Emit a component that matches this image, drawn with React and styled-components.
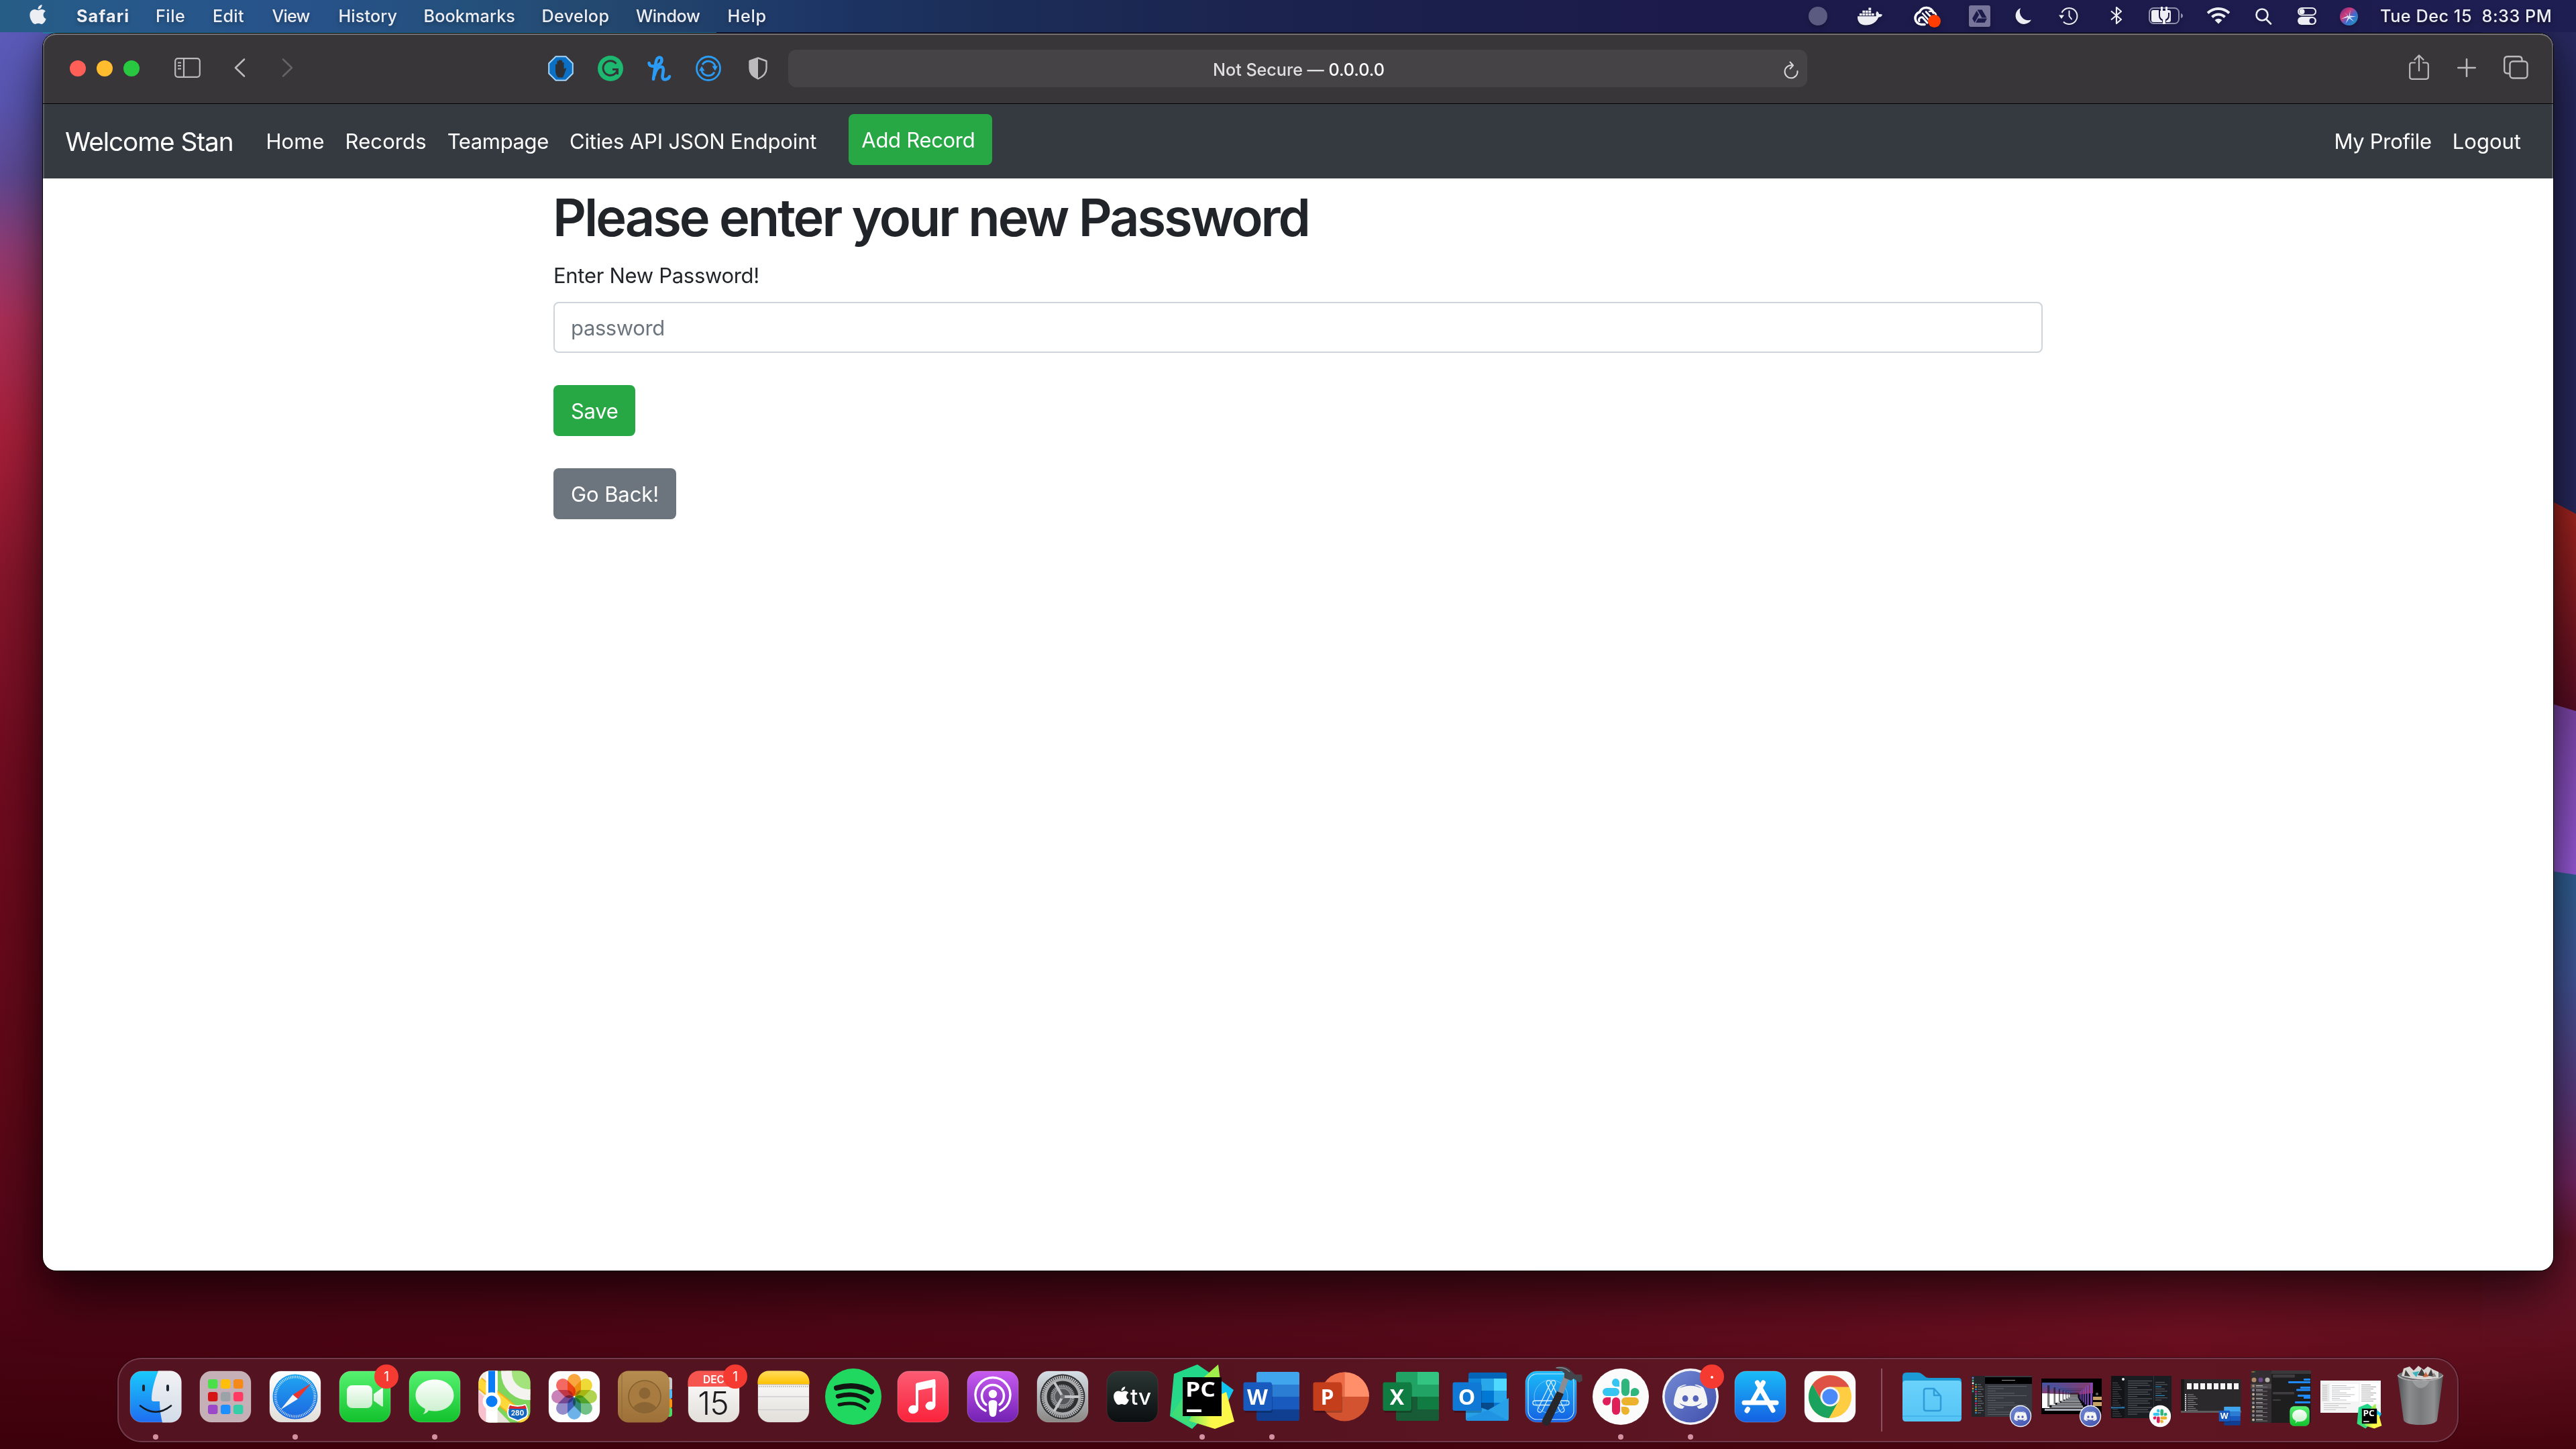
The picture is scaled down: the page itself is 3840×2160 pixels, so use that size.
import React from "react";
import styled, { createGlobalStyle } from "styled-components";
import { FaApple, FaDocker, FaGoogleDrive } from "react-icons/fa";

const GlobalStyle = createGlobalStyle`
  * { box-sizing: border-box; }
  body { margin: 0; overflow: hidden; background: #4d0615; }
`;

const Desktop = styled.main`
  position: relative;
  width: 3840px;
  height: 2160px;
  overflow: hidden;
  display: flex;
  flex-direction: column;
  font-family: Inter, "Liberation Sans", sans-serif;
`;

const Wallpaper = styled.svg`
  position: absolute;
  inset: 0;
  width: 100%;
  height: 100%;
`;

const Defs = styled.svg`
  position: absolute;
  width: 0;
  height: 0;
`;

/* ---------- menu bar ---------- */

const MenuBar = styled.header`
  position: relative;
  flex: none;
  height: 48px;
  padding: 0 38px 0 43px;
  display: flex;
  align-items: center;
  color: #eceef3;
  background: linear-gradient(90deg, #265d86 0, #27588a 200px, #27528a 450px, #24507c 700px, #24486f 900px, #1d3565 1230px, #1b2e58 1450px, #1b244f 1850px, #1b1f4b 2150px, #1c1a4b 2500px, #1d1b4c 3200px, #1f1e53 3840px);
`;

const Glyph = styled.svg`
  flex: none;
  display: block;
  width: ${(p) => p.$w}px;
  height: ${(p) => p.$h}px;
  margin-left: ${(p) => p.$gap || 0}px;
  margin-top: ${(p) => p.$drop || 0}px;
  overflow: visible;
`;

const AppleMark = styled(FaApple)`
  flex: none;
  width: 27px;
  height: 33px;
  margin-right: 44px;
  margin-top: -5px;
`;

const Whale = styled(FaDocker)`
  flex: none;
  width: 37px;
  height: 33px;
  margin-left: 45px;
`;

const DriveBox = styled.span`
  flex: none;
  display: grid;
  place-items: center;
  width: 32px;
  height: 32px;
  margin-left: 42px;
  color: #1c1a4b;
  background: #77769a;
  border-radius: 3px;
  svg { width: 22px; height: 22px; }
`;

const MenuItem = styled.span`
  flex: none;
  width: ${(p) => p.$w}px;
  font-size: 25.2px;
  line-height: 48px;
  font-weight: ${(p) => (p.$strong ? 700 : 500)};
  letter-spacing: ${(p) => p.$track}px;
  white-space: pre;
  text-shadow: 0 3px 6px rgba(0, 0, 0, 0.3);
`;

const Status = styled.div`
  display: flex;
  align-items: center;
  margin-left: auto;
  filter: drop-shadow(0 3px 3px rgba(0, 0, 0, 0.25));
`;

const Clock = styled(MenuItem)`
  margin-left: 33px;
`;

/* ---------- browser window ---------- */

const Window = styled.section`
  position: relative;
  flex: none;
  width: 3742px;
  height: 1844px;
  margin: 2px 0 0 64px;
  border-radius: 20px;
  overflow: hidden;
  background: #fff;
`;

const WindowShadow = styled.div`
  position: absolute;
  left: 64px;
  top: 50px;
  width: 3742px;
  height: 1844px;
  border-radius: 20px;
  box-shadow: 0 0 0 1px #000, 0 36px 80px 0 rgba(0, 0, 0, 0.62), 0 0 30px rgba(0, 0, 0, 0.25);
`;

const Toolbar = styled.div`
  display: flex;
  align-items: center;
  height: 105px;
  padding: 0 37px 0 40px;
  background: #383639;
  border-bottom: 1px solid #000;
  border-radius: 20px 20px 0 0;
  box-shadow: inset 0 2px 0 #737174, inset 2px 0 0 #59575a, inset -2px 0 0 #59575a;
`;

const Lights = styled.div`
  display: flex;
  gap: 16px;
`;

const Light = styled.i`
  width: 24px;
  height: 24px;
  border-radius: 50%;
  background: ${(p) => p.$color};
`;

const AddressBar = styled.div`
  display: grid;
  grid-template-columns: 1fr auto 1fr;
  align-items: center;
  width: 1519px;
  height: 56px;
  margin: 0 auto 0 31px;
  padding: 3px 13px 0 16px;
  border-radius: 12px;
  background: #454346;
`;

const Address = styled.span`
  grid-column: 2;
  font-size: 25.2px;
  font-weight: 500;
  letter-spacing: -0.05px;
  color: #dfdee0;
  b { font-weight: 500; color: #fff; }
`;

const Reload = styled(Glyph)`
  justify-self: end;
`;

/* ---------- page ---------- */

const Navbar = styled.nav`
  display: flex;
  align-items: center;
  gap: 31px;
  height: 111px;
  padding: 0 48px 0 33px;
  background: #343a40;
  box-shadow: inset 2px 0 0 #5a5f64, inset -2px 0 0 #5a5f64;
  color: #fff;
`;

const Brand = styled.span`
  font-size: 38.8px;
  letter-spacing: -1.1px;
  width: 268.500px;
  white-space: nowrap;
`;

const NavLink = styled.a`
  font-size: 31px;
  letter-spacing: ${(p) => p.$track}px;
  white-space: nowrap;
  margin-left: ${(p) => (p.$push ? "auto" : "0")};
`;

const Button = styled.button`
  display: block;
  height: 76px;
  padding: 0 ${(p) => (p.$snug ? 19 : 26)}px;
  width: ${(p) => p.$w}px;
  border: 0;
  border-radius: 8px;
  background: ${(p) => (p.$tone === "muted" ? "#6c757d" : "#28a745")};
  color: #fff;
  font: 400 31px Inter, "Liberation Sans", sans-serif;
  letter-spacing: ${(p) => p.$track}px;
  text-align: left;
  white-space: nowrap;
`;

const NavButton = styled(Button)`
  margin: 0 0 5px 17px;
`;

const Container = styled.div`
  width: 2220px;
  margin-left: 761px;
  padding-top: 10px;
  color: #212529;
`;

const Heading = styled.h1`
  margin: 0 0 16px -1px;
  font-size: 77.6px;
  line-height: 96px;
  font-weight: 600;
  letter-spacing: -3.1px;
`;

const Form = styled.form`
  display: flex;
  flex-direction: column;
  align-items: flex-start;
`;

const FieldLabel = styled.label`
  font-size: 31px;
  line-height: 46px;
  letter-spacing: -0.3px;
  margin-bottom: 16px;
`;

const Field = styled.input`
  width: 100%;
  height: 76px;
  margin-bottom: 48px;
  padding: 0 24px;
  border: 2px solid #ced4da;
  border-radius: 8px;
  background: #fff;
  font: 400 31px Inter, "Liberation Sans", sans-serif;
  letter-spacing: -0.4px;
  &::placeholder { color: #6c757d; opacity: 1; }
`;

const BackRow = styled.div`
  margin-top: 48px;
`;

/* ---------- dock ---------- */

const Dock = styled.footer`
  position: relative;
  flex: none;
  display: flex;
  width: 3490px;
  height: 126px;
  margin: 130px 0 0 175px;
  padding: 0 5px;
  border-radius: 36px;
  background: linear-gradient(90deg, #541320, #53131f 40%, #5f1623 75%, #5e1522);
  box-shadow: inset 0 0 0 2px #74394a, 0 0 0 1px rgba(20, 0, 5, 0.55);
`;

const DockSlot = styled.svg`
  flex: none;
  width: 104px;
  height: 126px;
  overflow: visible;
`;

const Divider = styled.div`
  width: 48px;
  padding: 16px 0 16px 24px;
  &::before {
    content: "";
    display: block;
    width: 2px;
    height: 94px;
    background: #8c5161;
  }
`;

const Petal = styled.rect`
  mix-blend-mode: multiply;
`;

const SANS = 'Inter, "Liberation Sans", sans-serif';
const OFFICE = '"Open Sans", "Noto Sans", sans-serif';

const Tile = ({ fill, stroke = "rgba(255,255,255,.25)" }) => (
  <rect x="-38" y="-38" width="76" height="76" rx="17" fill={fill} stroke={stroke} strokeWidth="1" />
);

const AlertBadge = ({ x = 32, text }) => (
  <g>
    <circle cx={x} cy="-30" r="18" fill="#f53a31" />
    {text ? (
      <text x={x} y="-23" fill="#fff" fontSize="20" textAnchor="middle" fontFamily={SANS}>{text}</text>
    ) : (
      <circle cx={x} cy="-29" r="2" fill="#fff" />
    )}
  </g>
);

const Finder = () => (
  <g>
    <Tile fill="url(#finderBlue)" />
    <path d="M4-38.5C-2-24-6-8-6 4q0 3 3 3h9C6 18 8 30 10 38.5H22a16.500 16.500 0 0 0 16.500-16.500V-22A16.500 16.500 0 0 0 22-38.500Z" fill="url(#finderWhite)" />
    <path d="M-18-16v6M18-16v6" stroke="#1c2630" strokeWidth="4" strokeLinecap="round" />
    <path d="M-23 13.500Q0 32 23 13.500" stroke="#141a22" strokeWidth="2.600" fill="none" strokeLinecap="round" />
  </g>
);

const PADS = ["#4be04a", "#ffbe08", "#f58a1b", "#d51616", "#9ba3a8", "#ff3b63", "#9a48c8", "#1e8fff", "#37cda8"];
const Launchpad = () => (
  <g>
    <Tile fill="#c6b0b8" />
    {PADS.map((c, i) => (
      <rect key={c} x={-26 + (i % 3) * 19} y={-26 + Math.floor(i / 3) * 19} width="14.500" height="14" rx="3.500" fill={c} />
    ))}
  </g>
);

const SafariIcon = () => (
  <g>
    <Tile fill="url(#paper)" />
    <circle r="33.500" fill="url(#skyBlue)" />
    <circle r="29.500" fill="none" stroke="#fff" strokeOpacity=".8" strokeWidth="4" strokeDasharray="1 1.575" />
    <path d="M24-20 4 3.500-3.500-3Z" fill="#e8362f" />
    <path d="M-22 19.500-3.500-3 4 3.500Z" fill="#f3f4f6" />
  </g>
);

const FaceTime = () => (
  <g>
    <Tile fill="url(#green)" />
    <rect x="-27" y="-17" width="38" height="34" rx="8" fill="url(#milk)" />
    <path d="M13-4 25-12.500q2-1 2 1v25q0 2-2 1L13 6Z" fill="url(#milk)" />
    <AlertBadge text="1" />
  </g>
);

const Messages = () => (
  <g>
    <Tile fill="url(#green)" />
    <path d="M0-25.500C17-25.500 28.500-15 28.500-2S17 21.500 0 21.500q-5 0-9-1Q-12 25-17.500 26-13.500 22-14.500 18-28.500 11-28.500-2C-28.500-15-17-25.500 0-25.500Z" fill="url(#milk)" />
  </g>
);

const Maps = () => (
  <g clipPath="url(#tileClip)">
    <rect x="-39" y="-39" width="78" height="78" fill="#7fd65c" />
    <path d="M-39-39H-10V30L-39 10Z" fill="#efece6" />
    <path d="M-39-10 39 70H-39Z" fill="#e9e5dd" />
    <path d="M-39-8-27 4V39H-39Z" fill="#f8bfcd" />
    <path d="M-39-22 39 42" stroke="#f3b21d" strokeWidth="17" />
    <path d="M-39-22 39 42" stroke="#ffd93a" strokeWidth="13" />
    <circle cx="36" cy="-36" r="33" fill="#a2e37b" stroke="#f5f3ef" strokeWidth="16" />
    <path d="M-19-39V39" stroke="#fff" strokeWidth="17" />
    <path d="M-19-39V7" stroke="#0a7cf5" strokeWidth="10" />
    <circle cx="-19" cy="7" r="13.500" fill="#fff" />
    <circle cx="-19" cy="7" r="8.500" fill="#0a7cf5" />
    <path d="M8 12Q20 16 31 12 38 26 31 31L20 36 8 31Q2 26 8 12Z" fill="#1566c0" stroke="#fff" strokeWidth="2" />
    <path d="M8 13Q20 17 31 13L33 18H6Z" fill="#d9232e" />
    <text x="19.500" y="28" fontSize="10" fontWeight="700" fill="#fff" textAnchor="middle" fontFamily={SANS}>280</text>
  </g>
);

const PETALS = ["#fb9a1e", "#efd516", "#a6cf33", "#5bb974", "#56a9e8", "#8279c4", "#c26fae", "#f4524a"];
const Photos = () => (
  <g>
    <Tile fill="#fdfdfd" />
    {PETALS.map((c, i) => (
      <Petal key={c} x="-10" y="-34" width="20" height="33" rx="10" fill={c} opacity=".86" transform={`rotate(${i * 45})`} />
    ))}
  </g>
);

const Contacts = () => (
  <g>
    <rect x="30" y="-29" width="12" height="20" rx="4" fill="#c9c9c9" />
    <rect x="30" y="-11" width="12" height="14" rx="3" fill="#55b9f3" />
    <rect x="30" y="3" width="12" height="14" rx="3" fill="#fb9410" />
    <rect x="30" y="16" width="12" height="14" rx="4" fill="#4fd964" />
    <rect x="-39" y="-38.500" width="77" height="77" rx="16" fill="url(#leather)" />
    <path d="M-33-35V35" stroke="#8c6632" strokeWidth="1.500" opacity=".6" />
    <circle cx="1" cy="0" r="24" fill="#a87c41" stroke="#84602f" strokeWidth="1.600" />
    <circle cx="1" cy="-5" r="8.500" fill="#8b6634" />
    <path d="M-16 16Q-10 8 1 8t17 8Q12 24 1 24T-16 16Z" fill="#8b6634" />
  </g>
);

const Calendar = () => (
  <g>
    <Tile fill="url(#paper)" />
    <path d="M-38.500-15V-22A16.500 16.500 0 0 1-22-38.500H22A16.500 16.500 0 0 1 38.500-22V-15Z" fill="#f5554e" />
    <text x="0" y="-20" fontSize="15.500" fontWeight="600" fill="#fff" textAnchor="middle" fontFamily={SANS}>DEC</text>
    <text x="-1" y="27" fontSize="48" fontWeight="300" fill="#1d1d1f" textAnchor="middle" fontFamily={SANS} letterSpacing="-1">15</text>
    <AlertBadge text="1" />
  </g>
);

const Notes = () => (
  <g>
    <Tile fill="url(#paper)" />
    <path d="M-38.500-18.500V-22A16.500 16.500 0 0 1-22-38.500H22A16.500 16.500 0 0 1 38.500-22V-18.500Z" fill="url(#noteYellow)" />
    <path d="M-38-18H38" stroke="#b5a78a" strokeWidth="1" />
    <path d="M-37-15H38" stroke="#a9a7a3" strokeWidth="1.500" strokeDasharray="1.500 1.500" />
    <path d="M-38 0H38M-38 19.500H38" stroke="#cfd0d4" strokeWidth="1.500" />
  </g>
);

const Spotify = () => (
  <g>
    <circle r="42" fill="#20d760" />
    <g fill="none" stroke="#121512" strokeLinecap="round">
      <path d="M-25-13Q5-21 27-7.500" strokeWidth="8" />
      <path d="M-23-.5Q4-8 21.500 6" strokeWidth="6.500" />
      <path d="M-21 12Q3 6 17 17.500" strokeWidth="5" />
    </g>
  </g>
);

const Music = () => (
  <g>
    <Tile fill="url(#musicRed)" />
    <path d="M-9-20.500 16-26Q18.500-26.500 18.500-24V-14.500L-7-9.500V19H-11V-18Q-11-20-9-20.500Z" fill="#fff" />
    <path d="M14-18h4.500V13H14Z" fill="#fff" />
    <ellipse cx="-14.500" cy="19" rx="7.500" ry="6.300" fill="#fff" transform="rotate(-12 -14.500 19)" />
    <ellipse cx="11" cy="13.500" rx="7.500" ry="6.300" fill="#fff" transform="rotate(-12 11 13.500)" />
  </g>
);

const Podcasts = () => (
  <g>
    <Tile fill="url(#podPurple)" />
    <g fill="none" stroke="#fff" strokeWidth="3.500" strokeLinecap="round">
      <path d="M-11 21A26 26 0 1 1 11 21" />
      <path d="M-10 12A16.500 16.500 0 1 1 10 12" />
    </g>
    <circle cy="-4" r="6.200" fill="#fff" />
    <path d="M0 5q7 0 6.500 6L5 26q-1 4-5 4t-5-4L-6.500 11Q-7 5 0 5Z" fill="#fff" />
  </g>
);

const Settings = () => (
  <g>
    <Tile fill="url(#silver)" />
    <circle r="33.500" fill="#2e2f31" />
    <circle r="29" fill="none" stroke="#b9bbbd" strokeWidth="5" strokeDasharray="2 1.035" />
    <circle r="25.500" fill="none" stroke="#a8aaac" strokeWidth="4" />
    <circle r="16" fill="#55575a" stroke="#a0a2a4" strokeWidth="4" strokeDasharray="1.600 .9" />
    <circle r="12.500" fill="none" stroke="#8e9092" strokeWidth="2" />
    <g stroke="#c2c4c6" strokeWidth="3.800">
      <path d="M0 0H25M0 0-12.500-21.600M0 0-12.500 21.600" />
    </g>
    <circle r="3.200" fill="#75777a" />
  </g>
);

const AppleTV = () => (
  <g>
    <Tile fill="url(#tvBlack)" stroke="rgba(255,255,255,.08)" />
    <FaApple x="-32" y="-17" size={31} color="#fff" />
    <text x="-3" y="11.500" fontSize="33" fontWeight="500" fill="#fff" fontFamily={SANS} textLength="31" lengthAdjust="spacingAndGlyphs">tv</text>
  </g>
);

const PyCharm = () => (
  <g>
    <path d="M-7-48 12-35 8 30-5 38-15 48-48 29-42-34Z" fill="url(#pyGreen)" />
    <path d="M-46 27-28 0-20 36-15 46Z" fill="#3fdd76" />
    <path d="M24-48 27-25-2-25Z" fill="#9fee4c" />
    <path d="M28-24 47-10 37 10 24 8Z" fill="#0fc4ee" />
    <path d="M36-7 48 37 19 48-20 36-12 22 20 0Z" fill="url(#pyYellow)" />
    <rect x="-29" y="-29" width="58" height="58" fill="#000" />
    <text x="-25" y="-.5" fontSize="30" fontWeight="700" fill="#fff" fontFamily={OFFICE} textLength="45" lengthAdjust="spacingAndGlyphs">PC</text>
    <rect x="-23" y="19" width="22" height="4" fill="#fff" />
  </g>
);

const OfficeBox = ({ fill, letter }) => (
  <g>
    <rect x="-41" y="-19" width="42" height="43" rx="3" fill="rgba(0,0,0,.22)" />
    <rect x="-42.500" y="-21.500" width="42.500" height="42.500" rx="3" fill={fill} />
    <text x="-21.500" y="11.500" fontSize="32" fontWeight="700" fill="#fff" textAnchor="middle" fontFamily={OFFICE}>{letter}</text>
  </g>
);

const Word = () => (
  <g>
    <g clipPath="url(#officeClip)">
      <rect x="-23" y="-37" width="65" height="19" fill="#41a5ee" />
      <rect x="-23" y="-18" width="65" height="18" fill="#2b7cd3" />
      <rect x="-23" y="0" width="65" height="19" fill="#185abd" />
      <rect x="-23" y="19" width="65" height="18" fill="#103f91" />
    </g>
    <OfficeBox fill="#185abd" letter="W" />
  </g>
);

const PowerPoint = () => (
  <g>
    <circle cx="4.500" r="36.500" fill="#d35230" />
    <path d="M4.500 0V-36.500A36.500 36.500 0 0 0-32 0Z" fill="#ed6c47" />
    <path d="M4.500 0V-36.500A36.500 36.500 0 0 1 41 0Z" fill="#ff8f6b" />
    <OfficeBox fill="#c43e1c" letter="P" />
  </g>
);

const Excel = () => (
  <g>
    <g clipPath="url(#officeClip)">
      <rect x="-23" y="-37" width="65" height="74" fill="#185c37" />
      <rect x="-23" y="-37" width="32" height="37" fill="#21a366" />
      <rect x="9" y="-37" width="33" height="19" fill="#33c481" />
      <rect x="9" y="-18" width="33" height="18" fill="#21a366" />
      <rect x="9" y="0" width="33" height="19" fill="#107c41" />
    </g>
    <OfficeBox fill="#107c41" letter="X" />
  </g>
);

const Outlook = () => (
  <g>
    <rect x="-19" y="-36" width="57" height="62" rx="3" fill="#0364b8" />
    <rect x="-19" y="-27" width="19" height="36" fill="#0f86da" />
    <rect x="0" y="-27" width="19" height="18" fill="#28a8ea" />
    <rect x="19" y="-27" width="19" height="18" fill="#50d9ff" />
    <rect x="0" y="-9" width="19" height="18" fill="#0078d4" />
    <rect x="19" y="-9" width="19" height="18" fill="#28a8ea" />
    <rect x="0" y="9" width="19" height="12" fill="#064a8c" />
    <rect x="19" y="9" width="19" height="12" fill="#0078d4" />
    <path d="M-23 8 10 20 41 2V33q0 3-3 3H-20q-3 0-3-3Z" fill="#28a0e8" />
    <path d="M10 20 41 36H-20L-23 33Z" fill="#1d8fe0" opacity=".7" />
    <OfficeBox fill="#1079d6" letter="O" />
  </g>
);

const Xcode = () => (
  <g>
    <Tile fill="url(#storeBlue)" />
    <rect x="-34" y="-34" width="68" height="68" rx="13" fill="none" stroke="#c2e6ff" strokeWidth="1.200" />
    <circle r="25" fill="none" stroke="#6fc2fb" strokeWidth="1" />
    <g fill="none" stroke="#d8efff" strokeWidth="1.300">
      <rect x="-27" y="6" width="54" height="6.500" rx="3" />
      <rect x="-3.500" y="-2" width="7" height="52" rx="3.500" transform="translate(4 -22) rotate(26)" />
      <rect x="-3.500" y="-2" width="7" height="52" rx="3.500" transform="translate(-4 -22) rotate(-26)" />
    </g>
    <path d="M28-31 18-3 10-6 20-34Z" fill="#8b8d92" />
    <path d="M9-8 19-4-2 41q-3 4-8 1-5-3-3-7Z" fill="#26262b" />
    <path d="M5-43Q20-48 29-40L36-33 46-33 47-24 42-21 34-27 30-24 20-28 20-35Q14-41 5-43Z" fill="#43454b" />
    <path d="M8-43Q20-45 28-37" stroke="#8b8d94" strokeWidth="1.500" fill="none" />
  </g>
);

const SlackMark = () => (
  <g>
    <rect x="-27" y="-13" width="25" height="12" rx="6" fill="#36c5f0" />
    <path d="M-2-15V-21a5.500 6 0 0 0-11 0A5.500 6 0 0 0-8-15Z" fill="#36c5f0" />
    <rect x="1" y="-27" width="12" height="26" rx="6" fill="#2eb67d" />
    <path d="M15-1H21a6 5.500 0 0 0 0-12A6 5.500 0 0 0 15-7Z" fill="#2eb67d" />
    <rect x="1" y="1" width="26" height="12" rx="6" fill="#ecb22e" />
    <path d="M1 15V21a6 6 0 0 0 12 0A6 6 0 0 0 7 15Z" fill="#ecb22e" />
    <rect x="-13" y="1" width="12" height="26" rx="6" fill="#e01e5a" />
    <path d="M-15 1H-21a6 6 0 0 0 0 12A6 6 0 0 0-15 7Z" fill="#e01e5a" />
  </g>
);

const Slack = () => (
  <g>
    <circle r="42" fill="#fbfbfb" />
    <SlackMark />
  </g>
);

const DiscordFace = () => (
  <g transform="scale(.168) translate(-224.600 -226.700)">
    <path fill="#f4f4f4" d="M375.040 295.424c0-82.432-36.864-149.248-36.864-149.248-36.864-27.648-71.936-26.880-71.936-26.880l-3.584 4.096c43.520 13.312 63.744 32.512 63.744 32.512-60.811-33.329-132.244-33.335-191.232-7.424-9.472 4.352-15.104 7.424-15.104 7.424s21.248-20.224 67.328-33.536l-2.560-3.072s-35.072-.768-71.936 26.880c0 0-36.864 66.816-36.864 149.248 0 0 21.504 37.120 78.080 38.912 0 0 9.472-11.520 17.152-21.248-32.512-9.728-44.800-30.208-44.800-30.208 3.766 2.636 9.976 6.053 10.496 6.400 43.210 24.198 104.588 32.126 159.744 8.960 8.960-3.328 18.944-8.192 29.440-15.104 0 0-12.800 20.992-46.336 30.464 7.680 9.728 16.896 20.736 16.896 20.736 56.576-1.792 78.336-38.912 78.336-38.912z" />
    <ellipse cx="177.500" cy="243.200" rx="26" ry="28.500" fill="#5564b8" />
    <ellipse cx="271" cy="243.200" rx="26" ry="28.500" fill="#5564b8" />
  </g>
);

const DiscordDisc = () => (
  <g>
    <circle r="42" fill="#f2f2f4" />
    <circle r="38.500" fill="url(#blurple)" />
    <DiscordFace />
  </g>
);

const Discord = () => (
  <g>
    <DiscordDisc />
    <AlertBadge />
  </g>
);

const AppStore = () => (
  <g>
    <Tile fill="url(#storeBlue)" />
    <g stroke="#fff" strokeWidth="7" strokeLinecap="round" fill="none">
      <path d="M-24 9H24" />
      <path d="M4.500-21-12 8M-18.500 18.500-20 21" />
      <path d="M-4.500-21 19 20.500" />
    </g>
  </g>
);

const Chrome = () => (
  <g>
    <Tile fill="#fafafa" />
    <circle r="32" fill="#ffcd41" />
    <path d="M-26-18.500A32 32 0 0 0-1.500 32L12 8A14 14 0 0 1-12 7Z" fill="#1aa35f" />
    <path d="M-26-18.500A32 32 0 0 1 28.500-14.500H0A14.500 14.500 0 0 0-14 3Z" fill="#de5145" />
    <circle r="14.500" fill="#f3f3f3" />
    <circle r="11.500" fill="#4a89f7" />
  </g>
);

const Folder = () => (
  <g>
    <path d="M-44-30q0-6 6-6h17q4 0 7 3l5 4q2 1 5 1H39q5 0 5 5V0H-44Z" fill="#1c9ad6" />
    <path d="M-44-19q0-5 5-5H39q5 0 5 5V32q0 5-5 5H-39q-5 0-5-5Z" fill="url(#folderBlue)" />
    <path d="M-44 29H44" stroke="#3fb1e8" strokeWidth="1.500" />
    <path d="M-9-12H3L13-1V18q0 3-3 3H-9q-3 0-3-3V-9q0-3 3-3ZM3-12V-2H13" fill="none" stroke="#2e9cd8" strokeWidth="2.500" strokeLinejoin="round" />
  </g>
);

const range = (n) => Array.from({ length: n }, (_, i) => i);
const Mini = ({ children }) => <g transform="translate(28 29) scale(.385)">{children}</g>;

const DiscordThumb = () => (
  <g>
    <rect x="-45" y="-31" width="90" height="61" fill="#363a40" />
    <rect x="-45" y="-31" width="20" height="61" fill="#24262a" />
    <rect x="-25" y="-29" width="70" height="10" fill="#000" />
    <rect x="0" y="-25" width="20" height="1" fill="#999" />
    {range(6).map((i) => <circle key={i} cx="-43" cy={-28 + i * 4} r="1.400" fill={["#7289da", "#43b581", "#fff", "#c33", "#d6a74b", "#3aa"][i]} />)}
    {range(13).map((i) => (
      <g key={i}>
        <circle cx="-38.500" cy={-18 + i * 3.500} r="1.300" fill={["#43b581", "#faa61a", "#3498db", "#e91e63", "#9b59b6"][i % 5]} />
        <rect x="-36" y={-18.500 + i * 3.500} width={5 + (i % 3) * 2} height="1" fill="#74787e" />
        <rect x="-21" y={-16 + i * 3.500} width={[58, 24, 12, 40][i % 4]} height="1" fill="#5b6067" />
      </g>
    ))}
    <Mini><DiscordDisc /></Mini>
  </g>
);

const TunnelThumb = () => (
  <g>
    <rect x="-45" y="-27" width="90" height="53" fill="#000" />
    {range(7).map((i) => (
      <g key={i} transform={`translate(7 -3) scale(${0.780 ** i}) translate(-7 3)`}>
        <rect x="-44" y="-21" width="76" height="43" fill="#08080c" />
        <rect x="-44" y="-21" width="76" height="16" fill="url(#tunnel)" />
        <rect x="-44" y="-5" width="62" height="22" fill="#fff" />
        <rect x="-40" y="18" width="60" height="3" fill="#a9adb5" />
        <rect x="28" y="-21" width="3" height="42" fill="#7a4bc0" />
        <rect x="-36" y="-17" width="62" height="32" fill="#08080c" opacity=".55" />
      </g>
    ))}
    <rect x="32" y="0" width="13" height="5" fill="#c5a267" />
    <rect x="32" y="8" width="13" height="6" fill="#c5a267" />
    <circle cx="38" cy="-4" r="2" fill="#666" />
    <Mini><DiscordDisc /></Mini>
  </g>
);

const SlackThumb = () => (
  <g>
    <rect x="-45" y="-31" width="90" height="63" fill="#1a1d21" />
    <rect x="-45" y="-31" width="20" height="63" fill="#121418" />
    <rect x="-45" y="15" width="20" height="2.500" fill="#1779ba" />
    <rect x="18" y="-31" width="1" height="63" fill="#30343a" />
    {range(16).map((i) => (
      <g key={i}>
        <rect x="-43" y={-21 + i * 3.300} width={8 + (i % 4) * 2} height="1" fill="#484c52" />
        <rect x="-20" y={-24 + i * 3.300} width={[36, 30, 33, 14][i % 4]} height="1.200" fill="#54585e" />
        {i < 9 && <rect x="21" y={-22 + i * 3.300} width={[14, 18, 9][i % 3]} height="1.200" fill={i % 4 === 2 ? "#2a8ac0" : "#54585e"} />}
      </g>
    ))}
    <circle cx="-27" cy="-26" r="2" fill="#eee" />
    <Mini><Slack /></Mini>
  </g>
);

const WordThumb = () => (
  <g>
    <rect x="-45" y="-26" width="90" height="50" fill="#2b292b" />
    <rect x="-45" y="-26" width="5" height="50" fill="#1b1a1b" />
    <rect x="-45" y="21" width="90" height="3" fill="#5e5b5e" />
    {range(8).map((i) => <rect key={i} x={-36 + i * 10} y="-20" width="7" height="9" fill="#f5f5f5" />)}
    {range(9).map((i) => (
      <g key={i}>
        <rect x="-39" y={-4 + i * 2.900} width="2" height="2" fill="#ddd" />
        <rect x="-35" y={-3.500 + i * 2.900} width={9 + (i % 3) * 3} height="1" fill="#8a878a" />
      </g>
    ))}
    <Mini><Word /></Mini>
  </g>
);

const MessagesThumb = () => (
  <g>
    <rect x="-45" y="-39" width="90" height="78" rx="2" fill="#1e1e1f" />
    <rect x="-45" y="-39" width="31" height="78" rx="2" fill="#332e32" />
    <rect x="-45" y="-19" width="31" height="7" fill="#4c474b" />
    <rect x="-14" y="-39" width="59" height="5" fill="#3b383b" />
    {["#ff5f57", "#febc2e", "#28c840"].map((c, i) => <circle key={c} cx={-43 + i * 2} cy="-37" r=".8" fill={c} />)}
    {range(3).map((i) => <circle key={i} cx={-40 + i * 10} cy="-25" r="3.500" fill={["#b08a6a", "#6a4a8a", "#b5b0a8"][i]} />)}
    {range(9).map((i) => (
      <g key={i}>
        <circle cx="-41" cy={-16 + i * 6.300} r="2" fill={["#a98a70", "#8d8a95", "#c9b29d"][i % 3]} />
        <rect x="-37" y={-17 + i * 6.300} width="10" height="1.200" fill="#bbb" />
        <rect x="-37" y={-14.800 + i * 6.300} width="17" height="1" fill="#777" />
      </g>
    ))}
    <rect x="-12" y="-33" width="33" height="4.500" rx="1" fill="#3f3d40" />
    <rect x="-12" y="-7" width="32" height="3.500" rx="1" fill="#3f3d40" />
    <rect x="-12" y="4" width="12" height="2" rx="1" fill="#3f3d40" />
    {[[34, -27], [11, -23], [29, -15], [23, -11.500], [25, -3], [34, 0], [21, 7]].map(([x, y]) => (
      <rect key={y} x={x} y={y} width={44 - x} height="3" rx="1" fill="#1f8bff" />
    ))}
    <Mini><Messages /></Mini>
  </g>
);

const EditorThumb = () => (
  <g>
    <rect x="-45" y="-24" width="90" height="48" fill="#f4f4f4" />
    <rect x="-43" y="-19" width="11" height="26" fill="#e8e8e8" />
    <rect x="-30" y="-19" width="42" height="26" fill="#fff" />
    <rect x="14" y="-21" width="29" height="32" fill="#fff" />
    {range(9).map((i) => (
      <g key={i}>
        <rect x="-28" y={-17 + i * 2.700} width={[22, 34, 28, 12][i % 4]} height=".9" fill="#b7b9bd" />
        <rect x="16" y={-18 + i * 3} width={[14, 22, 18][i % 3]} height="1" fill="#a3a3a6" />
        <rect x="-42" y={-17 + i * 2.700} width="7" height=".8" fill="#bbb" />
      </g>
    ))}
    {range(4).map((i) => <rect key={i} x="-40" y={10 + i * 3} width={[40, 22, 34, 18][i]} height=".9" fill="#c2c2c4" />)}
    <Mini><PyCharm /></Mini>
  </g>
);

const Trash = () => (
  <g>
    <ellipse cx="0" cy="-32" rx="33.500" ry="7" fill="#6d6f72" />
    <path d="M-28-31-25-42-16-45-10-39-3-46 5-40 11-45 20-40 27-37 27-28Q0-22-28-31Z" fill="#d9d7d3" />
    <path d="M-22-40-15-30-24-31ZM2-42 8-30-4-32ZM16-41 20-30 11-31Z" fill="#44403f" />
    <path d="M-12-36-2-38-6-29Z" fill="#3bb3c0" />
    <path d="M8-37 12-30 4-29Z" fill="#c9663a" />
    <path d="M20-36 24-30 17-29Z" fill="#8a8785" />
    <path d="M-34-32Q-28-24 0-24T34-32L25 35Q22 42 0 42T-25 35Z" fill="url(#binGray)" />
    <path d="M-34-32Q-28-24 0-24T34-32" fill="none" stroke="#b0b2b4" strokeWidth="1.500" />
    <path d="M-12-23Q0-2 14-23Z" fill="#b8babc" opacity=".5" />
  </g>
);

const APPS = [
  [Finder, 1], [Launchpad], [SafariIcon, 1], [FaceTime], [Messages, 1], [Maps], [Photos], [Contacts], [Calendar],
  [Notes], [Spotify], [Music], [Podcasts], [Settings], [AppleTV], [PyCharm, 1], [Word, 1], [PowerPoint], [Excel],
  [Outlook], [Xcode], [Slack, 1], [Discord, 1], [AppStore], [Chrome],
];
const SHELF = [Folder, DiscordThumb, TunnelThumb, SlackThumb, WordThumb, MessagesThumb, EditorThumb, Trash];

const DockItem = ({ icon: Icon, running }) => (
  <DockSlot viewBox="0 0 104 126">
    <g transform="translate(52 58)"><Icon /></g>
    {running && <circle cx="52" cy="118" r="4" fill="#d491a2" />}
  </DockSlot>
);

const Grad = ({ id, from, to, diag }) => (
  <linearGradient id={id} x1="0" y1="0" x2={diag ? 1 : 0} y2="1">
    <stop offset="0" stopColor={from} />
    <stop offset="1" stopColor={to} />
  </linearGradient>
);

const Scenery = () => (
  <Wallpaper viewBox="0 0 3840 2160" preserveAspectRatio="none">
    <defs>
      <linearGradient id="wpLeft" x1="0" y1="0" x2="0" y2="1">
        <stop offset="0" stopColor="#5c5dbc" />
        <stop offset=".07" stopColor="#5a57b4" />
        <stop offset=".12" stopColor="#5f4a96" />
        <stop offset=".17" stopColor="#903c76" />
        <stop offset=".22" stopColor="#ab2f58" />
        <stop offset=".3" stopColor="#a81f3a" />
        <stop offset=".4" stopColor="#86152a" />
        <stop offset=".53" stopColor="#710b20" />
        <stop offset=".74" stopColor="#5f0816" />
        <stop offset=".86" stopColor="#520617" />
        <stop offset="1" stopColor="#440210" />
      </linearGradient>
      <linearGradient id="wpFloor" x1="0" y1="0" x2="1" y2="0">
        <stop offset="0" stopColor="#520617" stopOpacity="0" />
        <stop offset=".5" stopColor="#5e0d1e" stopOpacity=".7" />
        <stop offset=".85" stopColor="#741225" />
        <stop offset="1" stopColor="#661121" />
      </linearGradient>
      <linearGradient id="wpFade" x1="0" y1="0" x2="0" y2="1">
        <stop offset="0" stopColor="#3b0009" stopOpacity="0" />
        <stop offset=".4" stopColor="#3b0009" stopOpacity=".15" />
        <stop offset="1" stopColor="#3b0009" stopOpacity=".75" />
      </linearGradient>
      <Grad id="wpRed" from="#b72a1e" to="#560c24" />
      <Grad id="wpViolet" from="#7a44a4" to="#9c5ce0" />
      <linearGradient id="wpBlue" x1="0" y1="0" x2="0" y2="1">
        <stop offset="0" stopColor="#2e6496" />
        <stop offset=".25" stopColor="#43569a" />
        <stop offset=".48" stopColor="#5a3a7e" />
        <stop offset=".66" stopColor="#722560" />
        <stop offset=".78" stopColor="#66142a" />
        <stop offset="1" stopColor="#66142a" stopOpacity="0" />
      </linearGradient>
    </defs>
    <rect width="3840" height="2160" fill="url(#wpLeft)" />
    <rect y="1800" width="3840" height="360" fill="url(#wpFloor)" />
    <rect y="1880" width="3840" height="280" fill="url(#wpFade)" />
    <rect x="0" y="47" width="1068" height="3" fill="#2b88b4" />
    <rect x="0" y="48" width="64" height="3" fill="#5a5bba" />
    <rect x="1068" y="0" width="2772" height="60" fill="#1b1a45" />
    <rect x="3700" y="40" width="140" height="740" fill="#28285e" />
    <path d="M3700 692 3840 766V1065H3700Z" fill="url(#wpRed)" />
    <path d="M3700 1018 3840 1060V1310H3700Z" fill="url(#wpViolet)" />
    <path d="M3700 1283 3840 1304V2010H3700Z" fill="url(#wpBlue)" />
  </Wallpaper>
);

export default function App() {
  return (
    <Desktop>
      <GlobalStyle />
      <Defs aria-hidden="true">
        <defs>
          <Grad id="finderBlue" from="#1ac9fb" to="#1e6df0" />
          <Grad id="finderWhite" from="#f2f2f5" to="#d2dce8" />
          <Grad id="paper" from="#ffffff" to="#e2dfda" />
          <Grad id="skyBlue" from="#1fa5f2" to="#1d67e0" />
          <Grad id="green" from="#56f271" to="#12c12c" />
          <Grad id="milk" from="#fbfffb" to="#c9efcc" />
          <Grad id="leather" from="#b68d50" to="#9d7038" />
          <Grad id="noteYellow" from="#ffdc5c" to="#ffc200" />
          <Grad id="musicRed" from="#fb5c74" to="#fa233b" />
          <Grad id="podPurple" from="#c85bf0" to="#7321b3" />
          <Grad id="silver" from="#d5dfe6" to="#8b8885" />
          <Grad id="tvBlack" from="#2a3634" to="#0b0e10" />
          <Grad id="pyGreen" from="#21d789" to="#2fd98a" />
          <linearGradient id="pyYellow">
            <stop offset="0" stopColor="#6fe85c" />
            <stop offset=".5" stopColor="#fcf84a" />
          </linearGradient>
          <Grad id="blurple" from="#7289d3" to="#4150ad" diag />
          <Grad id="storeBlue" from="#1abcf8" to="#1560e2" />
          <Grad id="folderBlue" from="#6ad2fb" to="#55c4f5" />
          <Grad id="tunnel" from="#3b57a8" to="#c42a48" diag />
          <linearGradient id="binGray">
            <stop offset="0" stopColor="#4e5053" />
            <stop offset=".25" stopColor="#8a8c8e" />
            <stop offset=".5" stopColor="#77797b" />
            <stop offset=".8" stopColor="#8e9092" />
            <stop offset="1" stopColor="#505255" />
          </linearGradient>
          <linearGradient id="siri" x1="0" y1="0" x2="1" y2="1">
            <stop offset="0" stopColor="#5a2d8f" />
            <stop offset=".35" stopColor="#d23a78" />
            <stop offset=".6" stopColor="#3b6bd0" />
            <stop offset="1" stopColor="#1c9fb5" />
          </linearGradient>
          <clipPath id="tileClip"><rect x="-38.500" y="-38.500" width="77" height="77" rx="17" /></clipPath>
          <clipPath id="officeClip"><rect x="-23" y="-37" width="64" height="73" rx="3" /></clipPath>
        </defs>
      </Defs>
      <Scenery />
      <WindowShadow />

      <MenuBar>
        <AppleMark />
        <MenuItem $strong $w={118} $track={1.1}>Safari</MenuItem>
        <MenuItem $w={85} $track={0.48}>File</MenuItem>
        <MenuItem $w={88.5} $track={0.28}>Edit</MenuItem>
        <MenuItem $w={99} $track={-0.88}>View</MenuItem>
        <MenuItem $w={127} $track={0.1}>History</MenuItem>
        <MenuItem $w={176} $track={0.11}>Bookmarks</MenuItem>
        <MenuItem $w={140.5} $track={0.34}>Develop</MenuItem>
        <MenuItem $w={136.5} $track={-0.44}>Window</MenuItem>
        <MenuItem $w={60} $track={0.69}>Help</MenuItem>
        <Status>
          <Glyph $w={28} $h={28} viewBox="0 0 28 28"><circle cx="14" cy="14" r="14" fill="#5b5a80" /></Glyph>
          <Whale />
          <Glyph $w={41} $h={30} $gap={46} $drop={4} viewBox="0 0 41 30" fill="none">
            <path d="M17 25.500H12A9.500 9.500 0 0 1 9.500 7 11 11 0 0 1 30 8" stroke="#fff" strokeWidth="3.600" strokeLinecap="round" />
            <path d="M21 23 14 15A4 4 0 0 0 9 20.500" stroke="#fff" strokeWidth="3" strokeLinecap="round" />
            <path d="M14 9 24 20M19 6.500 27 15M34 11A9 9 0 0 0 24 6" stroke="#fff" strokeWidth="2.600" strokeLinecap="round" />
            <circle cx="31.500" cy="20.500" r="9.500" fill="#ff3d00" />
          </Glyph>
          <DriveBox><FaGoogleDrive /></DriveBox>
          <Glyph $w={26} $h={26} $gap={36} viewBox="0 0 26 26"><path d="M9 1A12.500 12.500 0 1 0 25 18.500 13 13 0 0 1 9 1Z" fill="#eceef3" /></Glyph>
          <Glyph $w={29} $h={28} $gap={40} viewBox="0 0 29 28" fill="none" stroke="#eceef3" strokeWidth="2">
            <path d="M4.500 9A12 12 0 1 1 7 22.500" />
            <path d="M0 12.500 4 18 8 12.500Z" fill="#eceef3" stroke="none" />
            <path d="M15.500 6.500V14L19 18.500" strokeLinecap="round" />
          </Glyph>
          <Glyph $w={20} $h={28} $gap={47} $drop={-3} viewBox="0 0 20 28" fill="none" stroke="#eceef3" strokeWidth="2.200" strokeLinejoin="round">
            <path d="M2 7.500 17 20 10 26V2L17 8 2 20.500" />
          </Glyph>
          <Glyph $w={52} $h={26} $gap={38} viewBox="0 0 52 26">
            <rect x="1" y="1" width="44" height="23" rx="6.500" fill="none" stroke="#8f8fae" strokeWidth="2" />
            <path d="M48 9q3 1 3 3.500T48 16Z" fill="#8f8fae" />
            <path d="M7 4H15V12Q15 18 20 20V22H7q-3 0-3-3V7q0-3 3-3ZM28 4H30q3 0 3 3V19q0 3-3 3H26V20Q31 18 31 12V8H28Z" fill="#eceef3" />
            <path d="M18-1V5H17V12q0 4 4 6v7h4V18q4-2 4-6V5H28V-1H25V5H21V-1Z" fill="#eceef3" />
          </Glyph>
          <Glyph $w={36} $h={26} $gap={34} $drop={-2} viewBox="0 0 36 26" fill="none" stroke="#eceef3" strokeWidth="4">
            <path d="M2 9.500Q9 3 18 3T34 9.500" />
            <path d="M8.500 15.500Q12.500 11.500 18 11.500T27.500 15.500" />
            <path d="M12.500 20Q18 15.500 23.500 20L18 25.500Z" fill="#eceef3" stroke="none" />
          </Glyph>
          <Glyph $w={25} $h={25} $gap={37} viewBox="0 0 25 25" fill="none" stroke="#eceef3" strokeWidth="2.600">
            <circle cx="10" cy="10" r="8.500" />
            <path d="M16 16.500 23 23.500" strokeLinecap="round" />
          </Glyph>
          <Glyph $w={28} $h={26} $gap={38} viewBox="0 0 28 26">
            <rect x="1" y="1" width="26" height="10.500" rx="5.250" fill="none" stroke="#eceef3" strokeWidth="2" />
            <circle cx="6.500" cy="6.200" r="4" fill="#eceef3" />
            <rect x="0" y="14" width="28" height="12" rx="6" fill="#eceef3" />
            <circle cx="21.500" cy="20" r="4" fill="#1e1d50" />
          </Glyph>
          <Glyph $w={27} $h={27} $gap={35} viewBox="0 0 28 28">
            <circle cx="14" cy="14" r="14" fill="url(#siri)" />
            <path d="M14 14 16 4 15.500 13 25 14 16 15.500 22 22 14.500 17 9 25 12.500 15.500 2 18 12 13 6 7Z" fill="#eaf6ff" opacity=".9" />
          </Glyph>
          <Clock $w={254} $track={0.55}>Tue Dec 15  8:33 PM</Clock>
        </Status>
      </MenuBar>

      <Window>
        <Toolbar>
          <Lights>
            <Light $color="#ff5f57" />
            <Light $color="#febc2e" />
            <Light $color="#28c840" />
          </Lights>
          <Glyph $w={39} $h={30} $gap={52} $drop={-2} viewBox="0 0 39 30" fill="none" stroke="#bcbabd" strokeWidth="2.200">
            <rect x="1.200" y="1.200" width="36.600" height="27.600" rx="4" />
            <path d="M14 1V29M5 7.500h5M5 12h5M5 16.500h5" />
          </Glyph>
          <Glyph $w={17} $h={28} $gap={50} $drop={-2} viewBox="0 0 17 28" fill="none" stroke="#bcbabd" strokeWidth="2.600" strokeLinecap="round" strokeLinejoin="round"><path d="M15 1.500 2 14 15 26.500" /></Glyph>
          <Glyph $w={17} $h={28} $gap={54} $drop={-2} viewBox="0 0 17 28" fill="none" stroke="#656366" strokeWidth="2.600" strokeLinecap="round" strokeLinejoin="round"><path d="M2 1.500 15 14 2 26.500" /></Glyph>
          <Glyph $w={38} $h={38} $gap={380} viewBox="0 0 38 38">
            <path d="M11.500 1.200H26.500L36.800 11.500V26.500L26.500 36.800H11.500L1.200 26.500V11.500Z" fill="#0b6fc4" stroke="#a6d4f7" strokeWidth="2" />
            <path d="M11 14q0-1.500 1.200-1.500T13.400 14V9q0-1.500 1.300-1.500T16 9V7.500Q16 6 17.300 6t1.300 1.500V8q0-1.500 1.300-1.500T21.200 8v3q0-1.300 1.200-1.300t1.200 1.300V20q1.500-2 3.500-1.500Q27 20 25.500 24T22 32.500H15Q11 28 11 23Z" fill="#2f3033" />
          </Glyph>
          <Glyph $w={38} $h={38} $gap={36} viewBox="0 0 38 38">
            <circle cx="19" cy="19" r="19" fill="#1db870" />
            <path d="M27.500 12A10.800 10.800 0 1 0 29.500 20.500H22M29.500 20.500V28" fill="none" stroke="#353437" strokeWidth="3" />
          </Glyph>
          <Glyph $w={36} $h={38} $gap={36} viewBox="0 0 36 38" fill="none" stroke="#2b9cf6" strokeWidth="4.600" strokeLinecap="round" strokeLinejoin="round">
            <path d="M2.500 11Q3 16.500 10 15.500 21.500 13.500 21.500 6.500 21.500 2.500 18 2.500 14 2.500 12.500 11L9 35" />
            <path d="M10.500 29Q14 17 20 16.500 25 16.500 23.500 24L22.500 31Q22.500 36 27 35.500T33 31" />
          </Glyph>
          <Glyph $w={38} $h={38} $gap={36} viewBox="0 0 38 38" fill="none" stroke="#2b9cf6" strokeWidth="2.800">
            <circle cx="19" cy="19" r="17.500" />
            <path d="M10 13.500A10.500 10.500 0 0 1 29.400 17M28 24.500A10.500 10.500 0 0 1 8.600 21" />
            <path d="M24.500 15.500H33L29 22.500ZM13.500 22.500H5L9 15.500Z" fill="#2b9cf6" stroke="none" />
          </Glyph>
          <Glyph $w={28} $h={34} $gap={41} viewBox="0 0 28 34">
            <path d="M14 1.500 26.500 6V17Q26.500 27 14 32.500 1.500 27 1.500 17V6Z" fill="none" stroke="#bcbabd" strokeWidth="2.400" strokeLinejoin="round" />
            <path d="M14 1.500V32.500Q1.500 27 1.500 17V6Z" fill="#bcbabd" />
          </Glyph>
          <AddressBar>
            <Address>Not Secure — <b>0.0.0.0</b></Address>
            <Reload $w={22} $h={26} viewBox="0 0 22 26" fill="none" stroke="#d8d7d9" strokeWidth="2" strokeLinecap="round" strokeLinejoin="round">
              <path d="M13 6.500A9.500 9.500 0 1 0 20.500 15M9.500 1.500 14 6.500 9.500 11.500" />
            </Reload>
          </AddressBar>
          <Glyph $w={30} $h={38} $drop={-5} viewBox="0 0 30 38" fill="none" stroke="#bcbabd" strokeWidth="2.200" strokeLinecap="round" strokeLinejoin="round">
            <path d="M9 12.500H4.500Q1.200 12.500 1.200 16V33.500Q1.200 36.800 4.500 36.800H25.500Q28.800 36.800 28.800 33.500V16Q28.800 12.500 25.500 12.500H21M15 24.500V2M8.500 8 15 1.500 21.500 8" />
          </Glyph>
          <Glyph $w={28} $h={28} $gap={42} $drop={-3} viewBox="0 0 28 28" fill="none" stroke="#bcbabd" strokeWidth="2.600" strokeLinecap="round"><path d="M14 1.300V26.700M1.300 14H26.700" /></Glyph>
          <Glyph $w={37} $h={35} $gap={41} $drop={-3} viewBox="0 0 37 35" fill="none" stroke="#bcbabd" strokeWidth="2.400" strokeLinejoin="round">
            <path d="M9.500 26.500H6Q1.200 26.500 1.200 22V6Q1.200 1.200 6 1.200H23Q27.500 1.200 27.500 6V8" />
            <rect x="9.500" y="8.500" width="26" height="25" rx="4.500" />
          </Glyph>
        </Toolbar>

        <Navbar>
          <Brand>Welcome Stan</Brand>
          <NavLink $track={0.05}>Home</NavLink>
          <NavLink $track={0.1}>Records</NavLink>
          <NavLink $track={-0.38}>Teampage</NavLink>
          <NavLink $track={-0.15}>Cities API JSON Endpoint</NavLink>
          <NavButton $snug $w={214} $track={-0.3}>Add Record</NavButton>
          <NavLink $push $track={-0.3}>My Profile</NavLink>
          <NavLink $track={0}>Logout</NavLink>
        </Navbar>

        <Container>
          <Heading>Please enter your new Password</Heading>
          <Form>
            <FieldLabel htmlFor="password">Enter New Password!</FieldLabel>
            <Field id="password" type="password" placeholder="password" />
            <Button type="button" $w={122} $track={-0.3}>Save</Button>
            <BackRow>
              <Button type="button" $tone="muted" $w={183} $track={-0.1}>Go Back!</Button>
            </BackRow>
          </Form>
        </Container>
      </Window>

      <Dock>
        {APPS.map(([icon, running], i) => <DockItem key={i} icon={icon} running={running} />)}
        <Divider />
        {SHELF.map((icon, i) => <DockItem key={i} icon={icon} />)}
      </Dock>
    </Desktop>
  );
}
